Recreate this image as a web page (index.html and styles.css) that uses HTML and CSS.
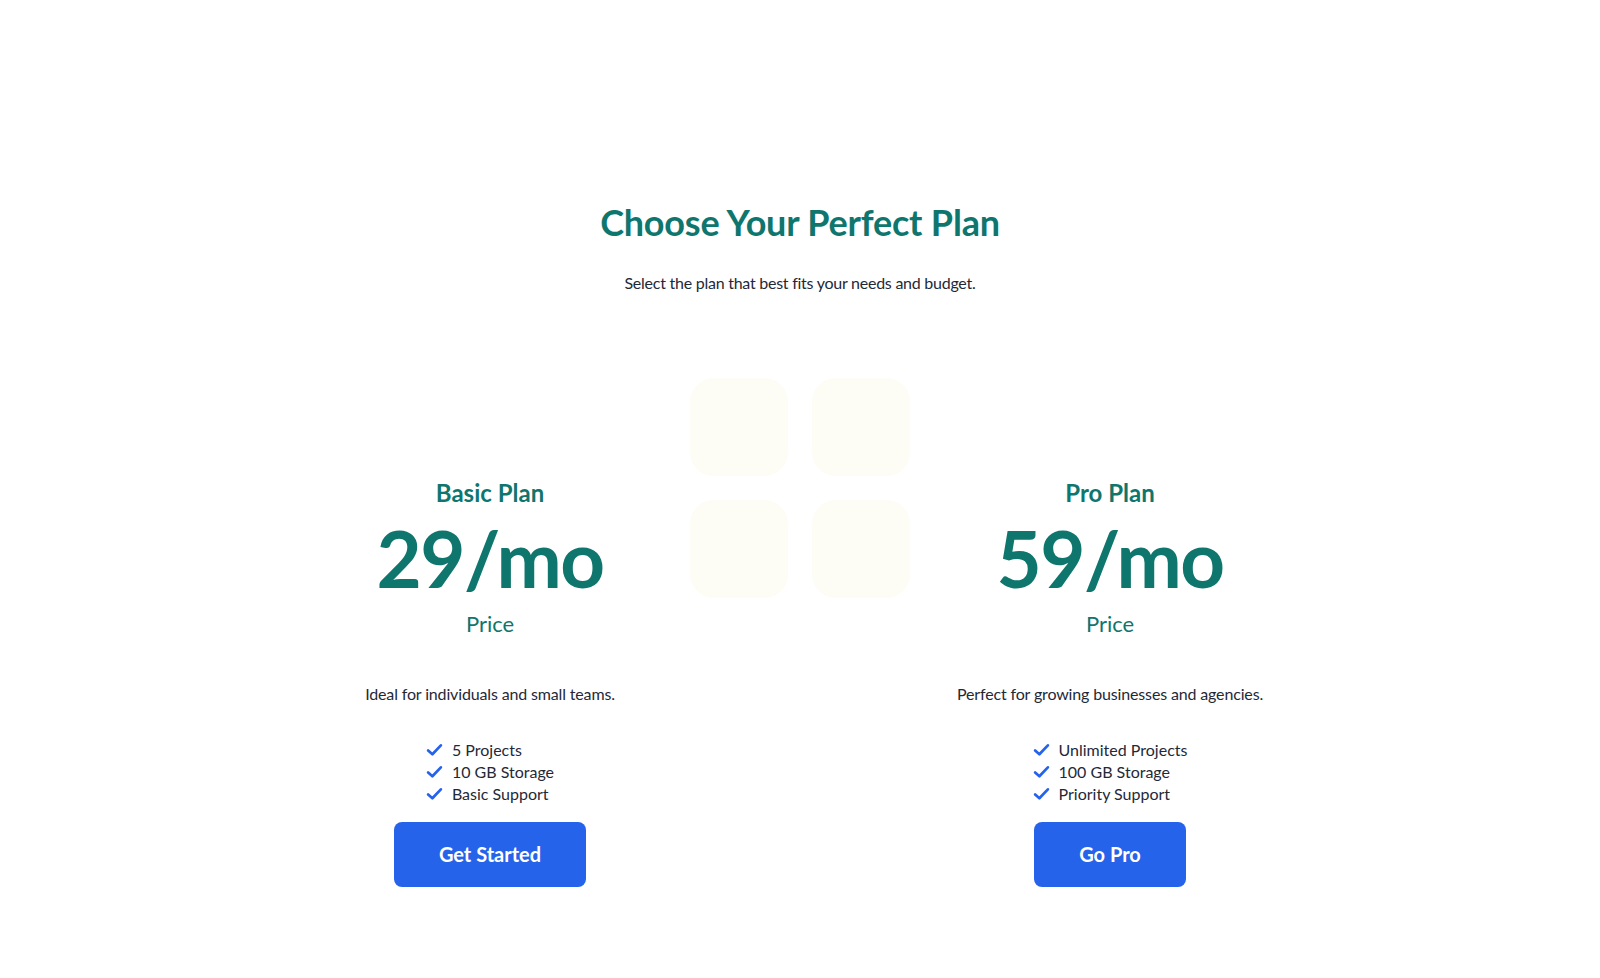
FILE: index.html
```html
<!DOCTYPE html>
<html lang="en">
<head>
<meta charset="utf-8">
<title>Choose Your Perfect Plan</title>
<link rel="stylesheet" href="styles.css">
</head>
<body>
<main class="page">
  <header class="hero">
    <h1 class="hero-title">Choose Your Perfect Plan</h1>
    <p class="hero-sub">Select the plan that best fits your needs and budget.</p>
  </header>
  <section class="plans">
    <article class="plan">
      <h2 class="plan-name">Basic Plan</h2>
      <div class="plan-price">29/mo</div>
      <div class="plan-price-label">Price</div>
      <p class="plan-desc">Ideal for individuals and small teams.</p>
      <ul class="plan-features">
        <li><svg class="check" viewBox="0 0 20 16"><path d="M2.5 8.5l5 4.5 10-10.5"/></svg>5 Projects</li>
        <li><svg class="check" viewBox="0 0 20 16"><path d="M2.5 8.5l5 4.5 10-10.5"/></svg>10 GB Storage</li>
        <li><svg class="check" viewBox="0 0 20 16"><path d="M2.5 8.5l5 4.5 10-10.5"/></svg>Basic Support</li>
      </ul>
      <button class="plan-btn">Get Started</button>
    </article>
    <div class="plan-art">
      <span class="tile"></span><span class="tile"></span>
      <span class="tile"></span><span class="tile"></span>
    </div>
    <article class="plan">
      <h2 class="plan-name">Pro Plan</h2>
      <div class="plan-price">59/mo</div>
      <div class="plan-price-label">Price</div>
      <p class="plan-desc">Perfect for growing businesses and agencies.</p>
      <ul class="plan-features">
        <li><svg class="check" viewBox="0 0 20 16"><path d="M2.5 8.5l5 4.5 10-10.5"/></svg>Unlimited Projects</li>
        <li><svg class="check" viewBox="0 0 20 16"><path d="M2.5 8.5l5 4.5 10-10.5"/></svg>100 GB Storage</li>
        <li><svg class="check" viewBox="0 0 20 16"><path d="M2.5 8.5l5 4.5 10-10.5"/></svg>Priority Support</li>
      </ul>
      <button class="plan-btn">Go Pro</button>
    </article>
  </section>
</main>
</body>
</html>
```

FILE: styles.css
```css
* { box-sizing: border-box; }
html, body { margin: 0; padding: 0; background: #ffffff; }
body {
  font-family: Lato, "Noto Sans", "Liberation Sans", sans-serif;
  color: #1f2937;
}
.page {
  padding-top: 200px;
  display: flex;
  flex-direction: column;
  align-items: center;
}
.hero { text-align: center; }
.hero-title {
  margin: 0;
  font-size: 36px;
  line-height: 44px;
  font-weight: 700;
  color: #0f766e;
  letter-spacing: -0.2px;
}
.hero-sub {
  margin: 27px 0 0;
  font-size: 16px;
  line-height: 24px;
  letter-spacing: -0.25px;
  color: #1f2937;
}
.plans {
  margin-top: 83px;
  display: grid;
  grid-template-columns: 280px 280px 280px;
  column-gap: 30px;
  align-items: start;
}
.plan {
  padding-top: 99px;
  display: flex;
  flex-direction: column;
  align-items: center;
  text-align: center;
}
.plan-name {
  margin: 0;
  font-size: 24px;
  line-height: 32px;
  font-weight: 700;
  color: #0f766e;
}
.plan-price {
  margin-top: 5px;
  font-size: 78px;
  line-height: 88px;
  font-weight: 700;
  color: #0f766e;
  letter-spacing: -1.5px;
  white-space: nowrap;
}
.plan-price-label {
  margin-top: 7px;
  font-size: 22px;
  line-height: 30px;
  color: #0f766e;
}
.plan-desc {
  margin: 43px 0 0;
  font-size: 16px;
  line-height: 24px;
  letter-spacing: -0.15px;
  white-space: nowrap;
}
.plan-features {
  list-style: none;
  margin: 33px 0 0;
  padding: 0;
  text-align: left;
}
.plan-features li {
  display: flex;
  align-items: center;
  gap: 9px;
  font-size: 16px;
  line-height: 22px;
}
.check {
  width: 17px;
  height: 14px;
  fill: none;
  stroke: #2563eb;
  stroke-width: 3.2;
  stroke-linecap: round;
  stroke-linejoin: round;
}
.plan-btn {
  margin-top: 17px;
  border: 0;
  border-radius: 8px;
  background: #2563eb;
  color: #ffffff;
  font-family: inherit;
  font-size: 20px;
  line-height: 28px;
  font-weight: 700;
  padding: 18px 45px 19px;
}
.plan-art {
  display: grid;
  grid-template-columns: 98px 98px;
  grid-auto-rows: 98px;
  gap: 24px;
  justify-content: center;
}
.tile {
  display: block;
  background: #fdfcf5;
  border-radius: 24px;
}
```
